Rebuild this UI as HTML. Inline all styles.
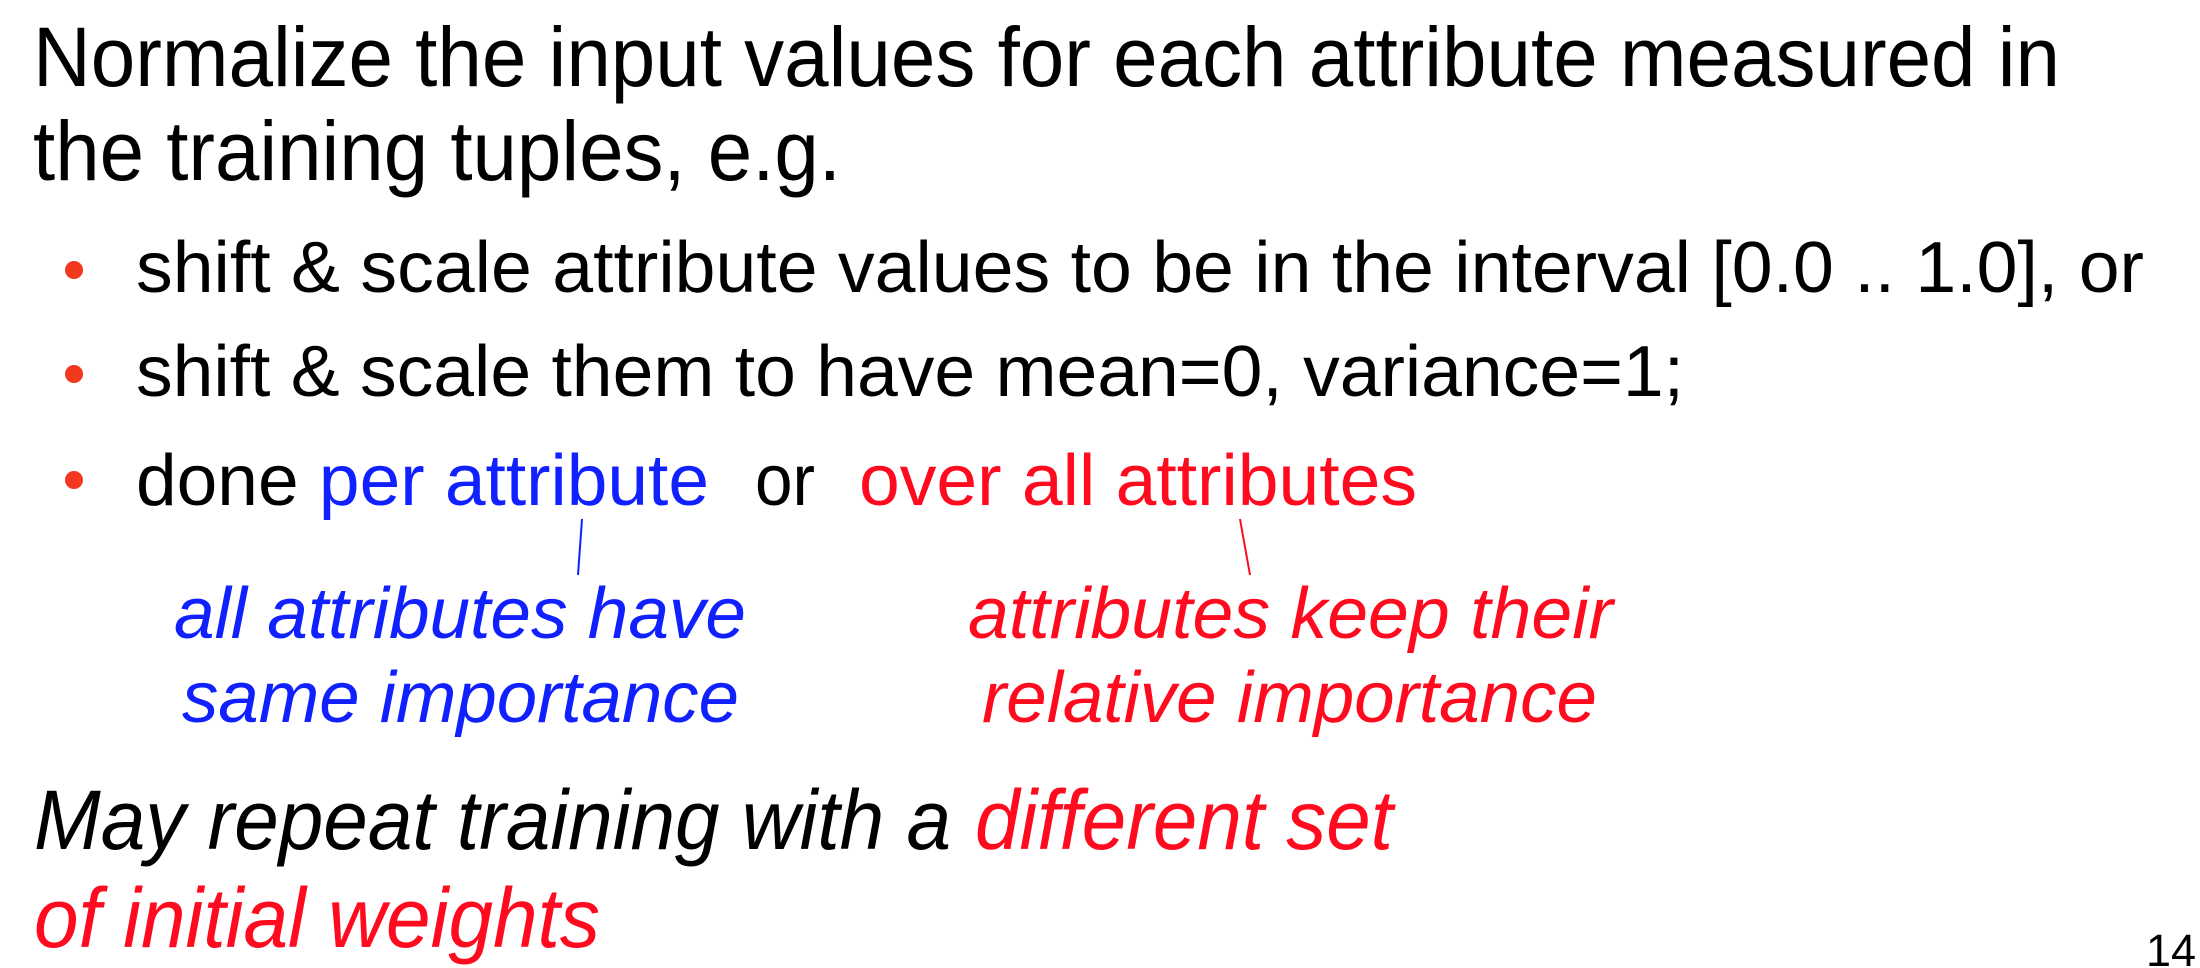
<!DOCTYPE html>
<html><head><meta charset="utf-8"><style>
html,body{margin:0;padding:0;background:#fff;}
svg{display:block;}
text{font-family:"Liberation Sans",Arial,sans-serif;}
</style></head><body>
<svg width="2200" height="968" viewBox="0 0 2200 968" xmlns="http://www.w3.org/2000/svg">
<g font-size="84" fill="#000">
<text x="33" y="86" textLength="2027" lengthAdjust="spacingAndGlyphs">Normalize the input values for each attribute measured in</text>
<text x="33" y="180" textLength="808" lengthAdjust="spacingAndGlyphs">the training tuples, e.g.</text>
</g>
<g fill="#f2381f">
<circle cx="74" cy="270" r="9"/>
<circle cx="74" cy="374" r="9"/>
<circle cx="74" cy="480" r="9"/>
</g>
<g font-size="72" fill="#000">
<text x="136" y="292" textLength="2008" lengthAdjust="spacingAndGlyphs">shift &amp; scale attribute values to be in the interval [0.0 .. 1.0], or</text>
<text x="136" y="396" textLength="1548" lengthAdjust="spacingAndGlyphs">shift &amp; scale them to have mean=0, variance=1;</text>
<text x="136" y="505" textLength="573" lengthAdjust="spacingAndGlyphs">done <tspan fill="#1020ff">per attribute</tspan></text>
<text x="755" y="505" textLength="60" lengthAdjust="spacingAndGlyphs">or</text>
<text x="859" y="505" fill="#ff0a1e" textLength="558" lengthAdjust="spacingAndGlyphs">over all attributes</text>
</g>
<line x1="582" y1="519" x2="578" y2="575" stroke="#1020ff" stroke-width="2"/>
<line x1="1240" y1="519" x2="1250" y2="575" stroke="#ff0a1e" stroke-width="2"/>
<g font-size="72" font-style="italic">
<text x="174" y="638" fill="#1020ff" textLength="572" lengthAdjust="spacingAndGlyphs">all attributes have</text>
<text x="182" y="722" fill="#1020ff" textLength="557" lengthAdjust="spacingAndGlyphs">same importance</text>
<text x="968" y="638" fill="#ff0a1e" textLength="645" lengthAdjust="spacingAndGlyphs">attributes keep their</text>
<text x="982" y="722" fill="#ff0a1e" textLength="615" lengthAdjust="spacingAndGlyphs">relative importance</text>
</g>
<g font-size="84" font-style="italic">
<text x="34" y="849" fill="#000" textLength="917" lengthAdjust="spacingAndGlyphs">May repeat training with a</text>
<text x="975" y="849" fill="#ff0a1e" textLength="418" lengthAdjust="spacingAndGlyphs">different set</text>
<text x="34" y="947" fill="#ff0a1e" textLength="566" lengthAdjust="spacingAndGlyphs">of initial weights</text>
</g>
<text x="2146" y="966" font-size="45" fill="#000">14</text>
</svg>
</body></html>
